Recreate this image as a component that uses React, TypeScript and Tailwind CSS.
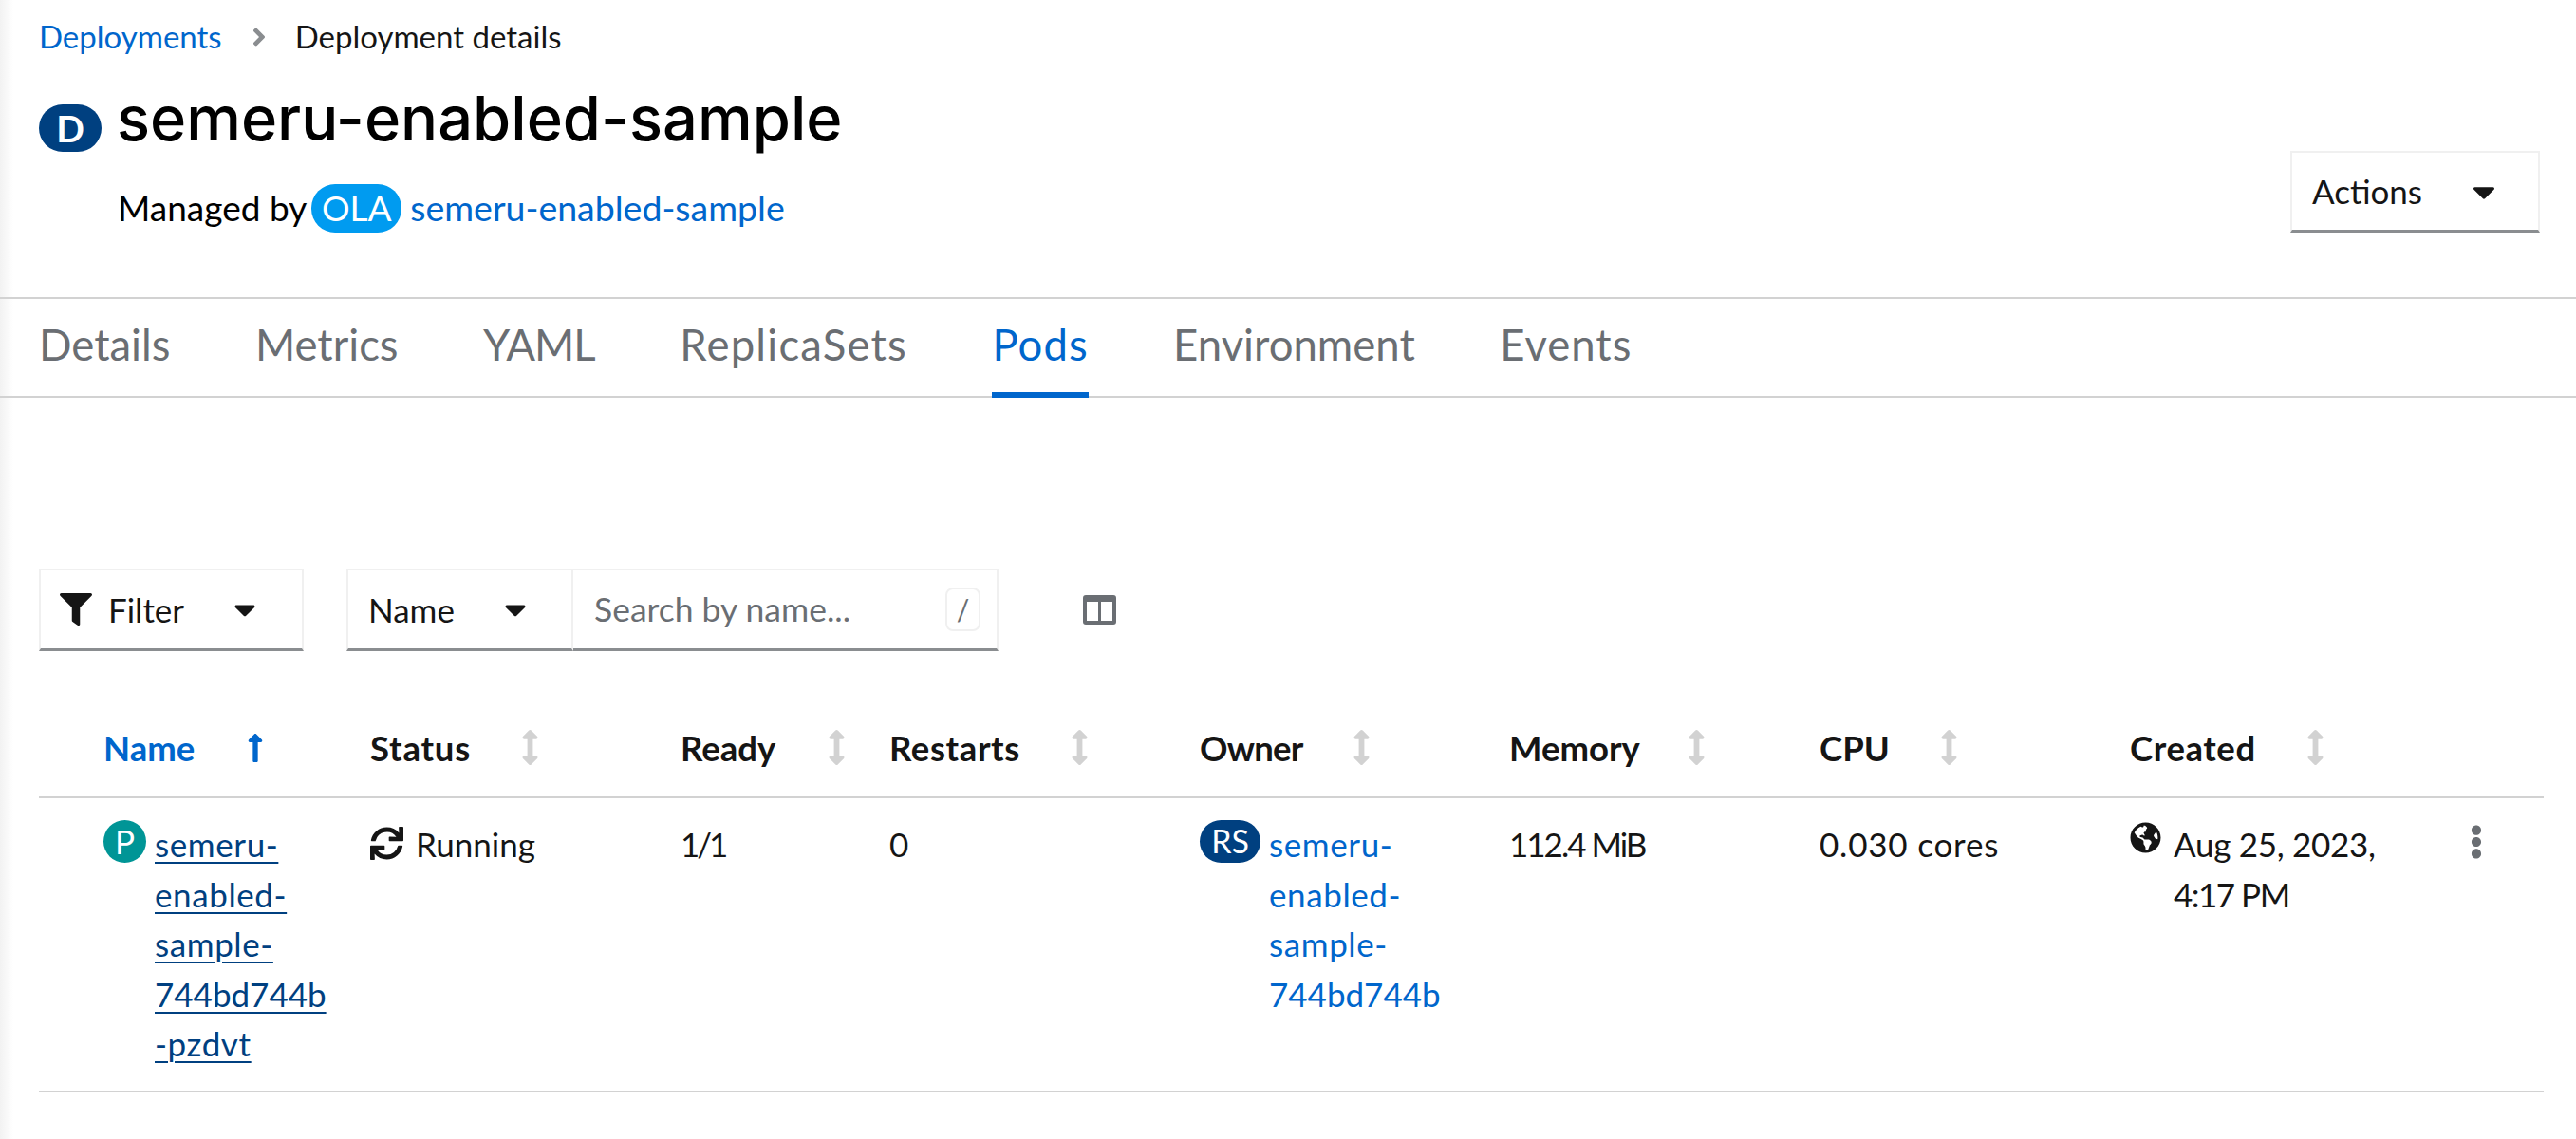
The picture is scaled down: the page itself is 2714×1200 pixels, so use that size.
import React from "react";
import { FaSync, FaGlobeAmericas, FaEllipsisV, FaFilter, FaCaretDown, FaArrowsAltV, FaLongArrowAltUp, FaAngleRight } from "react-icons/fa";

const font = "font-['Lato','Liberation_Sans',sans-serif]";
const cols = "grid-cols-[349px_327px_220px_327px_326px_327px_327px_436px]";

function Head({ label, active, cls }: { label: string; active?: boolean; cls: string }) {
  return (
    <div className={`flex items-center font-bold text-[36.5px] leading-[50px] ${active ? "text-[#0066cc]" : "text-[#151515]"}`}>
      <span className={cls}>{label}</span>
      {active ? <FaLongArrowAltUp className="text-[#0066cc] text-[34px]" /> : <FaArrowsAltV className="text-[#d2d2d2] text-[37px]" />}
    </div>
  );
}

function Stack({ lines, cls }: { lines: string[]; cls: string }) {
  return (
    <a className={cls}>
      {lines.map((l, i) => (
        <React.Fragment key={i}>
          <span className={/^\d/.test(l) ? "" : "tracking-[0.6px]"}>{l}</span>
          {i < lines.length - 1 && <br />}
        </React.Fragment>
      ))}
    </a>
  );
}

export default function App() {
  const tabs = [
    { t: "Details", c: "" },
    { t: "Metrics", c: "" },
    { t: "YAML", c: "tracking-[-1px]" },
    { t: "ReplicaSets", c: "tracking-[1.2px]" },
    { t: "Pods", c: "tracking-[1px]" },
    { t: "Environment", c: "" },
    { t: "Events", c: "tracking-[1px]" },
  ];
  return (
    <div className={`${font} relative w-[2714px] h-[1200px] bg-white overflow-hidden text-[35px] text-[#151515]`}>
      <div className="absolute left-0 top-0 bottom-0 w-[14px] bg-gradient-to-r from-[#f2f2f2] to-white" />
      <header className="relative h-[313px] pl-[41px] pr-[38px] flex justify-between">
        <div>
          <nav className="flex items-center h-[40px] mt-[19px] text-[33px]">
            <a className="text-[#0066cc]">Deployments</a>
            <FaAngleRight className="text-[#8a8d90] text-[30px] ml-[24px] mr-[23px]" />
            <span>Deployment details</span>
          </nav>
          <div className="flex items-start mt-[32px] h-[62px]">
            <span className="mt-[19px] w-[66px] h-[50px] rounded-[25px] bg-[#004080] text-white flex items-center justify-center text-[39px] font-bold">D</span>
            <h1 className="ml-[16px] mt-[3px] text-[65px] leading-[62px] font-medium text-black font-['Inter',sans-serif]">semeru-enabled-sample</h1>
          </div>
          <div className="flex items-center mt-[40px] ml-[83px] h-[52px] text-[37px]">
            <span className="text-black">Managed by</span>
            <span className="ml-[5px] w-[95px] h-[51px] rounded-[25px] bg-[#009bf0] text-white flex items-center justify-center text-[37px]">OLA</span>
            <a className="ml-[9px] text-[#0066cc] text-[37.5px]">semeru-enabled-sample</a>
          </div>
        </div>
        <button className="mt-[159px] w-[263px] h-[86px] border-2 border-[#f0f0f0] border-b-[3px] border-b-[#8a8d90] flex items-center pl-[21px]">
          <span>Actions</span>
          <FaCaretDown className="ml-[46px] text-[38px]" />
        </button>
      </header>

      <nav className="relative h-[106px] border-y-2 border-[#d2d2d2] flex pl-[41px] gap-[89.5px] text-[45.5px] text-[#6a6e73]">
        {tabs.map(({ t, c }) => (
          <div key={t} className={`h-[104px] leading-[96px] relative ${c} ${t === "Pods" ? "text-[#0066cc]" : ""}`}>
            {t}
            {t === "Pods" && <div className="absolute left-0 right-0 bottom-0 h-[6px] bg-[#0066cc]" />}
          </div>
        ))}
      </nav>

      <div className="relative flex items-center mt-[180px] pl-[41px]">
        <div className="w-[279px] h-[87px] border-2 border-[#f0f0f0] border-b-[3px] border-b-[#8a8d90] flex items-center pl-[20px]">
          <FaFilter className="text-[34px]" />
          <span className="ml-[17px]">Filter</span>
          <FaCaretDown className="ml-[46px] text-[36px]" />
        </div>
        <div className="ml-[45px] w-[239px] h-[87px] border-2 border-[#f0f0f0] border-b-[3px] border-b-[#8a8d90] flex items-center pl-[21px]">
          <span>Name</span>
          <FaCaretDown className="ml-[46px] text-[36px]" />
        </div>
        <div className="w-[448px] h-[87px] border-t-2 border-r-2 border-[#f0f0f0] border-b-[3px] border-b-[#8a8d90] flex items-center pl-[22px] justify-between pr-[17px]">
          <span className="text-[#6a6e73] text-[35.5px]">Search by name...</span>
          <kbd className={`${font} w-[37px] h-[46px] border-2 border-[#f0f0f0] rounded-[8px] flex items-center justify-center text-[30px] text-[#6a6e73]`}>/</kbd>
        </div>
        <svg className="ml-[89px]" width="35" height="31" viewBox="0 0 35 31" fill="#6a6e73">
          <path d="M3 0h29a3 3 0 0 1 3 3v25a3 3 0 0 1-3 3H3a3 3 0 0 1-3-3V3a3 3 0 0 1 3-3zm1 7v20h12V7H4zm15 0v20h12V7H19z" fillRule="evenodd" />
        </svg>
      </div>

      <div className="relative mx-[41px] mt-[55px] w-[2639px]">
        <div className={`grid ${cols} pb-[5px] border-b-2 border-[#d2d2d2] h-[100px] items-center`}>
          <div className="pl-[68px]"><Head label="Name" active cls="mr-[47px]" /></div>
          <Head label="Status" cls="mr-[44px] tracking-[0.8px]" />
          <Head label="Ready" cls="mr-[46px]" />
          <Head label="Restarts" cls="mr-[44px] tracking-[0.6px]" />
          <Head label="Owner" cls="mr-[44px] tracking-[-0.8px]" />
          <Head label="Memory" cls="mr-[41px]" />
          <Head label="CPU" cls="mr-[44px]" />
          <Head label="Created" cls="mr-[44px] tracking-[0.6px]" />
        </div>
        <div className={`grid ${cols} h-[310px] border-b-2 border-[#d2d2d2] pt-[22px] leading-[52.5px]`}>
          <div className="pl-[68px] flex items-start">
            <span className="shrink-0 mt-[1px] w-[45px] h-[45px] rounded-full bg-[#009596] text-white flex items-center justify-center text-[35px]">P</span>
            <Stack cls="ml-[9px] w-[190px] text-[#004080] underline decoration-2 underline-offset-[5px]" lines={["semeru-", "enabled-", "sample-", "744bd744b", "-pzdvt"]} />
          </div>
          <div className="flex items-start">
            <FaSync className="text-[35px] mt-[8px]" />
            <span className="ml-[13px]">Running</span>
          </div>
          <div className="tracking-[-3px]">1/1</div>
          <div>0</div>
          <div className="flex items-start">
            <span className="shrink-0 mt-[1px] w-[64px] h-[45px] rounded-[23px] bg-[#004080] text-white flex items-center justify-center text-[34px]">RS</span>
            <Stack cls="ml-[9px] text-[#0066cc]" lines={["semeru-", "enabled-", "sample-", "744bd744b"]} />
          </div>
          <div className="tracking-[-2px]">112.4 MiB</div>
          <div className="tracking-[0.8px]">0.030 cores</div>
          <div className="flex items-start relative">
            <FaGlobeAmericas className="text-[33px] mt-[3px] shrink-0" />
            <span className="ml-[13px] tracking-[-0.3px]">Aug 25, 2023,<br /><span className="tracking-[-1.5px]">4:17 PM</span></span>
            <FaEllipsisV className="absolute left-[347px] top-[6px] text-[#6a6e73] text-[36px]" />
          </div>
        </div>
      </div>
    </div>
  );
}
